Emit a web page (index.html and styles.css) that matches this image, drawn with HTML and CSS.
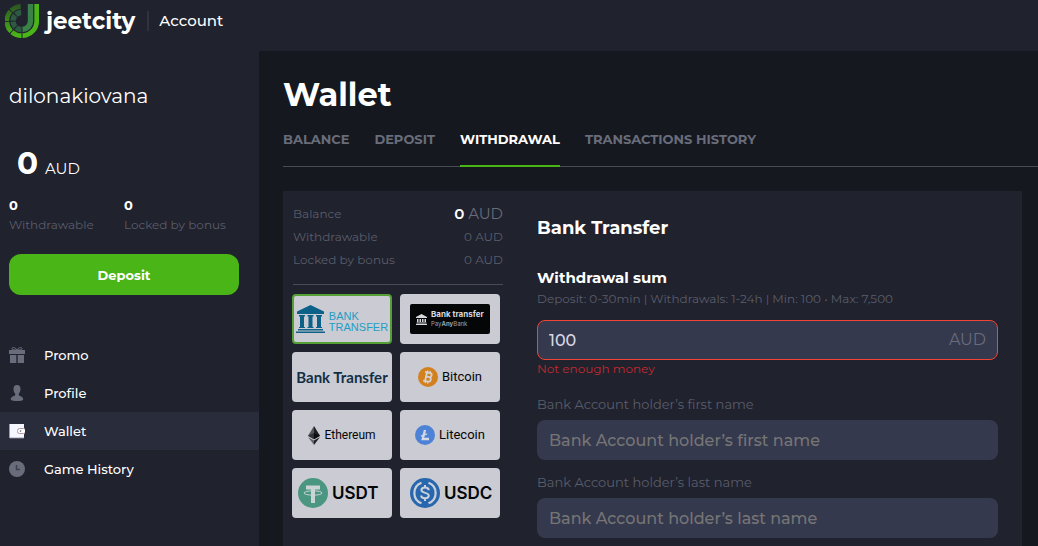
FILE: index.html
```html
<!DOCTYPE html>
<html lang="en">
<head>
    <meta charset="UTF-8">
    <meta name="viewport" content="width=device-width, initial-scale=1.0">
    <title>Wallet</title>
    <link rel="stylesheet" href="styles.css">
</head>
<body>
    <header class="header">
        <a class="logo" href="#">
            <svg width="34" height="34" viewBox="0 0 34 34" fill="none" aria-hidden="true">
                <defs>
                    <linearGradient id="ring" x1="0" y1="0" x2="0" y2="1">
                        <stop offset="0" stop-color="#2b5a22"/>
                        <stop offset="1" stop-color="#4ab516"/>
                    </linearGradient>
                </defs>
                <path d="M31.7 0V17A14.7 14.7 0 0 1 17.5 31.7" stroke="#4ab516" stroke-width="4.7"/>
                <path d="M16.5 31.7A14.7 14.7 0 0 1 16.5 2.3" stroke="url(#ring)" stroke-width="4.7" stroke-dasharray="10.5 1"/>
                <path d="M25.5 0V17A8.5 8.5 0 0 1 17.5 25.5" stroke="#3a8049" stroke-width="5.4"/>
                <path d="M16.5 25.5A8.5 8.5 0 0 1 16.5 8.5" stroke="#2d5a40" stroke-width="5.4" stroke-dasharray="5.8 1"/>
            </svg>
            <span class="logo-text">jeetcity</span>
        </a>
        <span class="header-title">Account</span>
    </header>

    <div class="layout">
        <aside class="sidebar">
            <p class="username">dilonakiovana</p>
            <p class="total"><b>0</b> AUD</p>
            <dl class="sums">
                <div><dt>Withdrawable</dt><dd>0</dd></div>
                <div><dt>Locked by bonus</dt><dd>0</dd></div>
            </dl>
            <button class="deposit" type="button">Deposit</button>
            <nav class="menu">
                <a href="#">
                    <svg width="16" height="16" viewBox="0 0 16 16" fill="#696c7a" aria-hidden="true">
                        <path d="M0 3h16v4H0zM1 8h6.3v8H1zM8.7 8H15v8H8.7z"/>
                        <path d="M8 3C4 3 2 2.500 3 1.200S7 .8 8 3c1-2.200 4-3.100 5-1.800S12 3 8 3z" fill="none" stroke="#696c7a"/>
                    </svg>
                    Promo
                </a>
                <a href="#">
                    <svg width="16" height="16" viewBox="0 0 16 16" fill="#696c7a" aria-hidden="true">
                        <path d="M8 0c2.400 0 3.500 1.500 3.500 4 0 2-.7 3.700-1.700 4.700v1.500c1 1 4.400 1.300 4.400 4 0 1.400-2.500 1.800-6.200 1.800s-6.200-.4-6.200-1.800c0-2.700 3.400-3 4.400-4V8.700C5.200 7.700 4.500 6 4.500 4 4.500 1.500 5.600 0 8 0z"/>
                    </svg>
                    Profile
                </a>
                <a class="active" href="#">
                    <svg width="16" height="16" viewBox="0 0 16 16" aria-hidden="true">
                        <path d="M0 1h15v14H0z" fill="#f5f6ff"/>
                        <path d="M0 1v14" stroke="#3030d8"/>
                        <path d="M1 15.200h14" stroke="#696c7a"/>
                        <rect x="8.500" y="5.500" width="8" height="5" rx="2" fill="#fff" stroke="#b09aa0"/>
                        <circle cx="11.500" cy="8" r=".8" fill="#555868"/>
                    </svg>
                    Wallet
                </a>
                <a href="#">
                    <svg width="16" height="16" viewBox="0 0 16 16" aria-hidden="true">
                        <circle cx="8" cy="8" r="8" fill="#696c7a"/>
                        <path d="M7.500 4v4.500H11" fill="none" stroke="#3c3f4c" stroke-width="1.500"/>
                    </svg>
                    Game History
                </a>
            </nav>
        </aside>

        <main class="main">
            <h1>Wallet</h1>
            <nav class="tabs">
                <a href="#">BALANCE</a>
                <a href="#">DEPOSIT</a>
                <a class="active" href="#">WITHDRAWAL</a>
                <a href="#">TRANSACTIONS HISTORY</a>
            </nav>

            <form class="panel">
                <div class="side">
                    <dl class="balance">
                        <div class="balance-main"><dt>Balance</dt><dd><b>0</b> AUD</dd></div>
                        <div><dt>Withdrawable</dt><dd>0 AUD</dd></div>
                        <div><dt>Locked by bonus</dt><dd>0 AUD</dd></div>
                    </dl>
                    <div class="methods">
                        <label class="method bank">
                            <input type="radio" name="method" checked>
                            <svg width="29" height="28" viewBox="0 0 29 28" fill="#0b6187" aria-hidden="true">
                                <path d="M14.500 0L28 6.500V9H1V6.500zM3 10h6v1.500H8V22h1v1H3v-1h1V11.500H3zM11.500 10h6v1.500h-1V22h1v1h-6v-1h1V11.500h-1zM20 10h6v1.500h-1V22h1v1h-6v-1h1V11.500h-1zM2 24h25v1.500H2zM0 26.500h29V28H0z"/>
                            </svg>
                            <span>BANK<br>TRANSFER</span>
                        </label>
                        <label class="method anybank">
                            <input type="radio" name="method">
                            <span class="plate">
                                <svg width="11" height="11" viewBox="0 0 11 11" fill="#d8d9dd" aria-hidden="true">
                                    <path d="M5.500 0L11 3v1H0V3zM1 5h1.500v3H1zM3.500 5H5v3H3.500zM6 5h1.500v3H6zM8.500 5H10v3H8.500zM.5 8.500h10v1H.5zM0 10h11v1H0z"/>
                                </svg>
                                <span><strong>Bank transfer</strong><small>Pay<b>Any</b>Bank</small></span>
                            </span>
                        </label>
                        <label class="method transfer">
                            <input type="radio" name="method">
                            <span>Bank Transfer</span>
                        </label>
                        <label class="method coin">
                            <input type="radio" name="method">
                            <svg width="20" height="20" viewBox="0 0 20 20" aria-hidden="true">
                                <circle cx="10" cy="10" r="10" fill="#d3801f"/>
                                <g transform="rotate(12 10 10)" fill="none" stroke="#d5d4d5" stroke-width="1.800">
                                    <path d="M6 5.500h5a2.200 2.200 0 0 1 0 4.400H8m3 0a2.300 2.300 0 0 1 0 4.600H6M8 5.500v9"/>
                                    <path d="M8.500 3.500v2M11 3.500v2M8.500 14.500v2M11 14.500v2" stroke-width="1.200"/>
                                </g>
                            </svg>
                            <span>Bitcoin</span>
                        </label>
                        <label class="method coin ethereum">
                            <input type="radio" name="method">
                            <svg width="12" height="19" viewBox="0 0 12 19" aria-hidden="true">
                                <path d="M6 0L0 9.700l6 3.600z" fill="#55565a"/>
                                <path d="M6 0l6 9.700-6 3.600z" fill="#1f2023"/>
                                <path d="M6 7L0 9.700l6 3.600z" fill="#303135"/>
                                <path d="M6 7l6 2.700-6 3.600z" fill="#0c0d0f"/>
                                <path d="M0 11l6 3.600V19z" fill="#626369"/>
                                <path d="M12 11l-6 3.600V19z" fill="#1f2023"/>
                            </svg>
                            <span>Ethereum</span>
                        </label>
                        <label class="method coin">
                            <input type="radio" name="method">
                            <svg width="20" height="20" viewBox="0 0 20 20" aria-hidden="true">
                                <circle cx="10" cy="10" r="10" fill="#4d82d6"/>
                                <path d="M10 5L7.700 14H14" fill="none" stroke="#d3d9e5" stroke-width="2.300"/>
                                <path d="M6 11.200l6-2.300" stroke="#d3d9e5" stroke-width="1.300"/>
                            </svg>
                            <span>Litecoin</span>
                        </label>
                        <label class="method tether">
                            <input type="radio" name="method">
                            <svg width="30" height="30" viewBox="0 0 30 30" aria-hidden="true">
                                <circle cx="15" cy="15" r="15" fill="#4a9681"/>
                                <path d="M8 7.500h14v4h-5V25h-4V11.500H8z" fill="#ccd3d5"/>
                                <ellipse cx="15" cy="15" rx="9" ry="2.200" fill="none" stroke="#ccd3d5"/>
                            </svg>
                            <span>USDT</span>
                        </label>
                        <label class="method usdc">
                            <input type="radio" name="method">
                            <svg width="30" height="30" viewBox="0 0 30 30" fill="none" stroke="#cbd1da" aria-hidden="true">
                                <circle cx="15" cy="15" r="15" fill="#2866ae" stroke="none"/>
                                <path d="M11.500 4.700a11 11 0 0 0 0 20.600M18.500 4.700a11 11 0 0 1 0 20.600" stroke-width="2.200"/>
                                <path d="M18.700 12.200c0-1.700-1.500-2.700-3.700-2.700s-3.600 1-3.600 2.600c0 3.700 7.400 1.900 7.400 5.500 0 1.700-1.600 2.700-3.800 2.700s-3.800-1-3.800-2.800M15 7v2.500M15 20.500V23" stroke-width="2"/>
                            </svg>
                            <span>USDC</span>
                        </label>
                    </div>
                </div>

                <div class="fields">
                    <h2>Bank Transfer</h2>
                    <label class="sum-label" for="sum">Withdrawal sum</label>
                    <p class="hint">Deposit: 0-30min | Withdrawals: 1-24h | Min: 100 • Max: 7,500</p>
                    <div class="sum-box">
                        <input type="text" id="sum" value="100">
                        <span>AUD</span>
                    </div>
                    <p class="error">Not enough money</p>
                    <div class="field">
                        <label for="first-name">Bank Account holder’s first name</label>
                        <input type="text" id="first-name" placeholder="Bank Account holder’s first name">
                    </div>
                    <div class="field">
                        <label for="last-name">Bank Account holder’s last name</label>
                        <input type="text" id="last-name" placeholder="Bank Account holder’s last name">
                    </div>
                </div>
            </form>
        </main>
    </div>
</body>
</html>
```

FILE: styles.css
```css
* {
    box-sizing: border-box;
}

body {
    margin: 0;
    min-height: 100vh;
    display: flex;
    flex-direction: column;
    background: #15181f;
    color: #fff;
    font-family: Montserrat, Inter, sans-serif;
    font-size: 12px;
    line-height: 16px;
}

h1, h2, p, dl, dd {
    margin: 0;
}

a {
    color: inherit;
    text-decoration: none;
}

input, button {
    font-family: inherit;
}

/* Header */
.header {
    display: flex;
    align-items: center;
    height: 51px;
    padding: 0 5px 10px;
    background: #20222e;
}

.logo {
    display: flex;
    align-items: center;
    gap: 7px;
}

.logo-text {
    font-size: 23px;
    font-weight: 700;
    line-height: 28px;
}

.header-title {
    margin-left: 12px;
    padding-left: 10px;
    border-left: 2px solid #30323e;
    font-size: 15px;
    font-weight: 500;
    line-height: 20px;
}

.layout {
    flex: 1;
    display: flex;
}

/* Sidebar */
.sidebar {
    flex: 0 0 259px;
    padding: 30px 0 0;
    background: #20222e;
}

.username {
    padding: 0 9px;
    font-size: 20px;
    line-height: 30px;
}

.total {
    padding: 32px 17px 0;
    font-size: 15px;
    line-height: 40px;
}

.total b {
    margin-right: 3px;
    font-size: 31px;
}

.sums {
    display: grid;
    grid-template-columns: 1fr 1fr;
    padding: 8px 20px 0 9px;
}

.sums div {
    display: flex;
    flex-direction: column-reverse;
    gap: 4px;
}

.sums dt {
    color: #5a5d6a;
}

.sums dd {
    font-size: 13px;
    font-weight: 700;
}

.deposit {
    display: block;
    width: 230px;
    height: 41px;
    margin: 21px 9px 41px;
    border: 0;
    border-radius: 12px;
    background: #4ab516;
    color: #fff;
    font-size: 13px;
    font-weight: 700;
    cursor: pointer;
}

.menu a {
    display: flex;
    align-items: center;
    gap: 19px;
    height: 38px;
    padding-left: 9px;
    font-size: 13px;
    font-weight: 500;
}

.menu .active {
    background: #292c3b;
}

/* Main */
.main {
    flex: 1;
    min-width: 0;
    display: flex;
    flex-direction: column;
    padding: 24px 0 0 24px;
}

h1 {
    font-size: 32px;
    line-height: 40px;
}

.tabs {
    display: flex;
    gap: 25px;
    margin: 16px 0 24px;
    box-shadow: inset 0 -1px #494b57;
    color: #696c7a;
    font-size: 13px;
    font-weight: 700;
}

.tabs a {
    padding-bottom: 18px;
    border-bottom: 2px solid transparent;
}

.tabs .active {
    border-color: #4ab516;
    color: #fff;
}

.panel {
    flex: 1;
    display: flex;
    gap: 34px;
    margin-right: 16px;
    padding: 0 24px 8px 10px;
    background: #20222e;
}

.side {
    flex: 0 0 210px;
}

/* Balance */
.balance {
    padding: 11px 0 13px;
    border-bottom: 1px solid #494b57;
    color: #5a5d6a;
}

.balance div {
    display: flex;
    justify-content: space-between;
    align-items: center;
    height: 23px;
}

.balance .balance-main dd {
    color: #696c7a;
    font-size: 15px;
}

.balance b {
    color: #fff;
    font-weight: 600;
}

/* Payment methods */
.methods {
    display: grid;
    grid-template-columns: 100px 100px;
    grid-auto-rows: 50px;
    gap: 8px;
    margin: 9px 0 0 -1px;
}

.method {
    display: flex;
    align-items: center;
    justify-content: center;
    gap: 4px;
    position: relative;
    border: 2px solid #cacbd3;
    border-radius: 4px;
    background: #cacbd3;
    color: #050608;
    white-space: nowrap;
    cursor: pointer;
}

.method svg {
    flex: none;
}

.method input {
    position: absolute;
    opacity: 0;
}

.method:has(input:checked) {
    border-color: #55a036;
}

.bank {
    color: #1f9dc4;
    font: 400 11px/11px "Liberation Sans", sans-serif;
}

.bank span {
    padding-top: 6px;
}

.plate {
    display: flex;
    align-items: center;
    gap: 4px;
    width: 80px;
    height: 30px;
    padding-left: 6px;
    border-radius: 2px;
    background: #050608;
    color: #d8d9dd;
    font-family: Inter, sans-serif;
}

.plate strong,
.plate small {
    display: block;
    font-size: 8px;
    line-height: 9px;
}

.plate small {
    color: #a0a1a6;
    font-size: 6px;
}

.transfer {
    color: #142f45;
    font: 700 15px/18px Lato, sans-serif;
}

.coin {
    font: 400 13px/16px Roboto, sans-serif;
}

.ethereum {
    font-size: 12px;
}

.tether,
.usdc {
    justify-content: flex-start;
    padding-left: 4px;
    font: 600 17px/20px Inter, sans-serif;
}

.usdc {
    padding-left: 8px;
}

/* Withdrawal form */
.fields {
    flex: 1;
    min-width: 0;
    padding-top: 24px;
}

h2 {
    font-size: 18px;
    line-height: 26px;
}

.sum-label {
    display: block;
    margin-top: 26px;
    font-size: 15px;
    font-weight: 700;
    line-height: 22px;
}

.hint {
    color: #5a5d6a;
    line-height: 20px;
}

.sum-box {
    display: flex;
    align-items: center;
    height: 40px;
    margin-top: 11px;
    padding: 0 11px;
    border: 1px solid #f44336;
    border-radius: 8px;
    background: #35394d;
    color: #696c7a;
    font-size: 16px;
}

.sum-box input {
    flex: 1;
    min-width: 0;
    padding: 0;
    border: 0;
    outline: 0;
    background: none;
    color: #d6d8e4;
    font-size: 16px;
    font-weight: 500;
}

.error {
    padding-top: 1px;
    color: #c22a2e;
}

.field {
    margin-top: 14px;
}

.field label {
    display: block;
    margin-bottom: 8px;
    color: #5a5d6a;
    font-size: 13px;
}

.error + .field {
    margin-top: 19px;
}

.field input {
    display: block;
    width: 100%;
    height: 40px;
    padding: 0 12px;
    border: 0;
    border-radius: 8px;
    background: #35394d;
    color: #d6d8e4;
    font-size: 16px;
    font-weight: 500;
}

.field input::placeholder {
    color: #757575;
}
```
